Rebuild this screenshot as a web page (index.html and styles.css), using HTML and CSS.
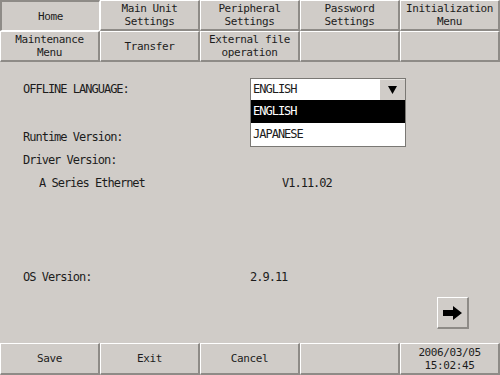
FILE: index.html
```html
<!DOCTYPE html>
<html lang="en">
<head>
  <meta charset="UTF-8" />
  <title>Offline Settings</title>
  <link rel="stylesheet" href="styles.css">
</head>
<body>
  <div class="screen">
    <!-- menu keys -->
    <nav class="tabs">
      <div class="key pressed">Home</div>
      <div class="key">Main Unit<br>Settings</div>
      <div class="key">Peripheral<br>Settings</div>
      <div class="key">Password<br>Settings</div>
      <div class="key">Initialization<br>Menu</div>
      <div class="key">Maintenance<br>Menu</div>
      <div class="key">Transfer</div>
      <div class="key">External file<br>operation</div>
      <div class="key"></div>
      <div class="key"></div>
    </nav>

    <main class="panel">
      <div class="row">
        <span>OFFLINE LANGUAGE:</span>
        <div class="select">
          <div class="select-head">
            <span>ENGLISH</span>
            <span class="drop-btn">
              <svg width="9" height="8" viewBox="0 0 9 8"><polygon points="0,0 9,0 4.5,8" fill="#000"/></svg>
            </span>
          </div>
          <ul class="select-list">
            <li class="active">ENGLISH</li>
            <li>JAPANESE</li>
          </ul>
        </div>
      </div>

      <div class="row runtime"><span>Runtime Version:</span><span></span></div>
      <div class="row"><span>Driver Version:</span><span></span></div>
      <div class="row sub"><span>A Series Ethernet</span><span>V1.11.02</span></div>

      <div class="row os"><span>OS Version:</span><span>2.9.11</span></div>

      <div class="next">
        <svg width="19" height="14" viewBox="0 0 19 14"><polygon points="0,4 10,4 10,0 19,7 10,14 10,10 0,10" fill="#000"/></svg>
      </div>
    </main>

    <footer class="tabs bottom">
      <div class="key">Save</div>
      <div class="key">Exit</div>
      <div class="key">Cancel</div>
      <div class="key"></div>
      <div class="key">2006/03/05<br>15:02:45</div>
    </footer>
  </div>
</body>
</html>
```

FILE: styles.css
```css
:root {
  --panel: #d0ccc8;
  --shade: #8e8b87;
  --ink: #1c1c1c;
}
* { margin: 0; padding: 0; box-sizing: border-box; }

body {
  width: 500px;
  height: 375px;
  overflow: hidden;
  background: var(--panel);
  color: var(--ink);
  font-family: "DejaVu Sans Mono", monospace;
  font-size: 12px;
  letter-spacing: -1px;
}
.screen {
  display: flex;
  flex-direction: column;
  height: 375px;
}

/* keys ------------------------------------------------------------*/
.tabs {
  display: grid;
  grid-template-columns: repeat(5, 100px);
  grid-template-rows: 31px 31px;
}
.tabs.bottom { grid-template-rows: 32px; }

.key {
  display: flex;
  align-items: center;
  justify-content: center;
  text-align: center;
  font-size: 11px;
  letter-spacing: -0.4px;
  line-height: 13px;
  border-style: solid;
  border-width: 1px 2px 2px 1px;
  border-color: #fff var(--shade) var(--shade) #fff;
}
.key.pressed {
  border-width: 2px 1px 1px 2px;
  border-color: var(--shade) #fff #fff var(--shade);
}

/* content ---------------------------------------------------------*/
.panel {
  flex: 1;
  display: flex;
  flex-direction: column;
  padding: 16px 0 0 23px;
}
.row {
  display: grid;
  grid-template-columns: 227px auto;
  height: 23px;
  line-height: 23px;
}
.row.runtime { margin-top: 25px; }
.row.sub span:first-child { padding-left: 16px; }
.row.sub span:last-child { padding-left: 32px; }
.row.os { margin-top: 71px; }

.select {
  position: relative;
  width: 156px;
  height: 23px;
}
.select-head {
  display: flex;
  height: 23px;
  line-height: 21px;
  padding-left: 2px;
  background: #fff;
  border: 1px solid #7a7874;
}
.drop-btn {
  margin-left: auto;
  width: 25px;
  display: flex;
  align-items: center;
  justify-content: center;
  background: var(--panel);
  border-top: 1px solid #e8e6e3;
}
.select-list {
  position: absolute;
  top: 22px;
  left: 0;
  width: 156px;
  list-style: none;
  background: #fff;
  border: 1px solid #7a7874;
  border-top: none;
}
.select-list li {
  height: 23px;
  line-height: 23px;
  padding-left: 2px;
}
.select-list li.active { background: #000; color: #fff; }

.next {
  align-self: flex-end;
  margin: 8px 31px 0 0;
  width: 32px;
  height: 32px;
  display: flex;
  align-items: center;
  justify-content: center;
  border-style: solid;
  border-width: 1px 2px 2px 1px;
  border-color: #fff var(--shade) var(--shade) #fff;
}
```
